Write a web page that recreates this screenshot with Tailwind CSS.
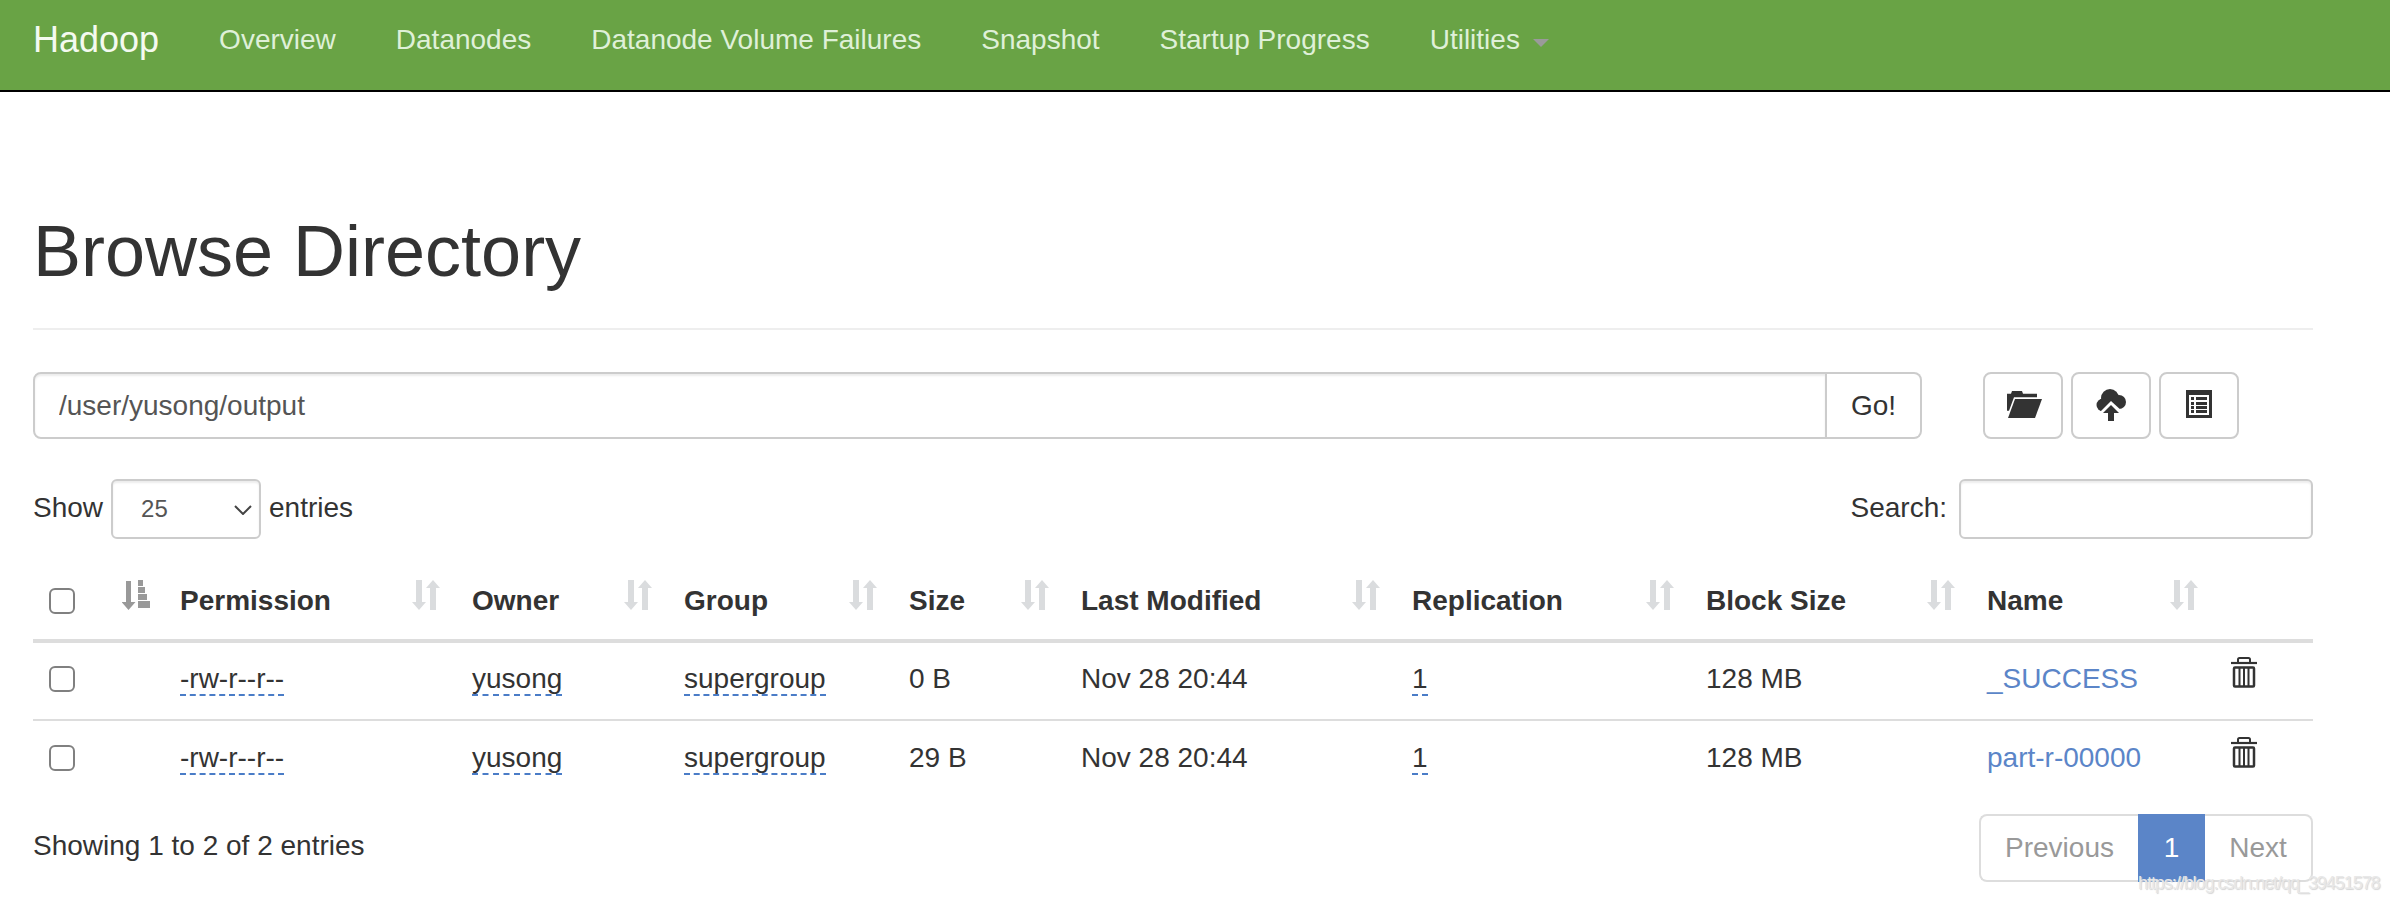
<!DOCTYPE html>
<html lang="en">
<head>
    <meta charset="UTF-8">
    <title>Browsing HDFS</title>
    <script src="https://cdn.jsdelivr.net/npm/@tailwindcss/browser@4"></script>
</head>
<body class="relative h-[902px] overflow-hidden bg-white font-['Liberation_Sans',Arial,sans-serif] text-[28px] leading-[40px] text-[#333]">
    <svg class="hidden">
        <symbol id="sort" viewBox="0 0 28 30">
            <path d="M4 0h6v22h4l-7 8-7-8h4z"/>
            <path d="M18 30h6V8h4l-7-8-7 8h4z"/>
        </symbol>
        <symbol id="trash" viewBox="0 0 26 31">
            <path fill="none" stroke="#333" stroke-width="2" d="M7 5V2.500Q7 1 8.500 1h9Q19 1 19 2.500V5"/>
            <path fill="none" stroke="#333" stroke-width="2.200" d="M0 6h26"/>
            <rect x="3" y="10.500" width="20" height="19" rx="1" fill="none" stroke="#333" stroke-width="2.500"/>
            <path fill="none" stroke="#333" stroke-width="2" d="M8.500 10v20M13 10v20M17.500 10v20"/>
        </symbol>
    </svg>

    <!-- Navbar -->
    <nav class="flex h-[92px] items-start border-b-2 border-black bg-[#69a345] pl-[33px]">
        <a href="#" class="mt-[20px] text-[36px] leading-[40px] text-[#f4faf0]">Hadoop</a>
        <ul class="ml-[30px] flex pt-[20px] text-[#dff0d8]">
            <li class="px-[30px]">Overview</li>
            <li class="px-[30px]">Datanodes</li>
            <li class="px-[30px]">Datanode Volume Failures</li>
            <li class="px-[30px]">Snapshot</li>
            <li class="px-[30px]">Startup Progress</li>
            <li class="flex items-center px-[30px]">Utilities
                <span class="mt-[5px] ml-[13px] h-0 w-0 border-x-[8px] border-t-[8px] border-x-transparent border-t-[#9a9a9a]"></span>
            </li>
        </ul>
    </nav>

    <div class="ml-[33px] w-[2280px]">
        <!-- Page header -->
        <h1 class="mt-[120px] text-[72px] leading-[79px] text-[#333]">Browse Directory</h1>
        <div class="mt-[37px] h-[2px] bg-[#eee]"></div>

        <!-- Path bar -->
        <div class="mt-[42px] flex h-[67px]">
            <div class="flex w-[1889px]">
                <input value="/user/yusong/output" class="min-w-0 flex-1 rounded-l-[8px] border-2 border-[#ccc] px-[24px] text-[28px] text-[#555] shadow-[inset_0_2px_2px_rgba(0,0,0,0.075)]">
                <button class="w-[95px] rounded-r-[8px] border-2 border-l-0 border-[#ccc] text-center text-[#333]">Go!</button>
            </div>
            <div class="ml-[61px] flex gap-[8px]">
                <button class="flex w-[80px] items-center justify-center rounded-[8px] border-2 border-[#ccc] pb-[3px] pl-[3px]">
                    <svg class="h-[27px] w-[35px]" viewBox="0 0 35 30" preserveAspectRatio="none" fill="#333"><path d="M0 3h4l1-3h10l1 3h14v4H7L2 22H0z"/><path d="M8 9h27l-7 21H1z"/></svg>
                </button>
                <button class="flex w-[80px] items-center justify-center rounded-[8px] border-2 border-[#ccc] pb-[1px]">
                    <svg class="h-[32px] w-[30px]" viewBox="0 0 30 32" fill="#333">
                        <circle cx="7" cy="16" r="6.500"/><circle cx="14" cy="9" r="9"/><circle cx="23" cy="13" r="7"/><path d="M7 12h16v9H7z"/>
                        <path fill="#fff" d="M15 12L4 23v9h23v-9z"/>
                        <path d="M15 16l8 8h-5v8h-6v-8H7z"/>
                    </svg>
                </button>
                <button class="flex w-[80px] items-center justify-center rounded-[8px] border-2 border-[#ccc] pb-[4px]">
                    <svg class="h-[28px] w-[26px]" viewBox="0 0 26 28" fill="#333">
                        <path fill-rule="evenodd" d="M0 0h26v28H0zM3 5v20h20V5z"/>
                        <path d="M5 7h3v3H5zM10 7h11v3H10zM5 12h3v3H5zM10 12h11v3H10zM5 16h3v3H5zM10 16h11v3H10zM5 20h3v3H5zM10 20h11v3H10z"/>
                    </svg>
                </button>
            </div>
        </div>

        <!-- Length + search -->
        <div class="mt-[40px] flex h-[60px] items-center justify-between">
            <label class="flex items-center">
                <span class="pb-[3px]">Show</span>
                <span class="relative mx-[8px] block">
                    <select class="block h-[60px] w-[150px] appearance-none rounded-[6px] border-2 border-[#ccc] bg-white pl-[28px] text-[24px] text-[#555] shadow-[inset_0_2px_2px_rgba(0,0,0,0.075)]"><option>25</option></select>
                    <svg class="absolute top-[26px] right-[9px] h-[10px] w-[18px]" viewBox="0 0 18 10" fill="none" stroke="#444" stroke-width="2"><path d="M1 1l8 8 8-8"/></svg>
                </span>
                <span class="pb-[3px]">entries</span>
            </label>
            <label class="flex items-center">
                <span class="pb-[3px]">Search:</span>
                <input class="ml-[12px] h-[60px] w-[354px] rounded-[6px] border-2 border-[#ccc] shadow-[inset_0_2px_2px_rgba(0,0,0,0.075)]">
            </label>
        </div>

        <!-- Table -->
        <table class="mt-[23px] w-full table-fixed border-collapse">
            <colgroup>
                <col class="w-[131px]"><col class="w-[292px]"><col class="w-[212px]"><col class="w-[225px]"><col class="w-[172px]"><col class="w-[331px]"><col class="w-[294px]"><col class="w-[281px]"><col class="w-[243px]"><col>
            </colgroup>
            <thead>
                <tr class="h-[79px] border-b-4 border-[#ddd] text-left font-bold">
                    <th class="relative pl-[16px]">
                        <input type="checkbox" class="block size-[26px] appearance-none rounded-[6px] border-2 border-[#808080] bg-white">
                        <svg class="absolute top-[18px] right-[14px] h-[30px] w-[28px]" viewBox="0 0 28 30" fill="#999">
                            <path d="M4 1h5v21h4.500l-7 8-7-8H4z"/>
                            <path d="M16 0h5v6h-5zM16 7h7v6h-7zM16 14h9v6h-9zM16 21h12v7H16z"/>
                        </svg>
                    </th>
                    <th class="relative pl-[16px]">Permission<svg class="absolute top-[18px] right-[16px] h-[30px] w-[28px] fill-[#dadcde]"><use href="#sort"/></svg></th>
                    <th class="relative pl-[16px]">Owner<svg class="absolute top-[18px] right-[16px] h-[30px] w-[28px] fill-[#dadcde]"><use href="#sort"/></svg></th>
                    <th class="relative pl-[16px]">Group<svg class="absolute top-[18px] right-[16px] h-[30px] w-[28px] fill-[#dadcde]"><use href="#sort"/></svg></th>
                    <th class="relative pl-[16px]">Size<svg class="absolute top-[18px] right-[16px] h-[30px] w-[28px] fill-[#dadcde]"><use href="#sort"/></svg></th>
                    <th class="relative pl-[16px]">Last Modified<svg class="absolute top-[18px] right-[16px] h-[30px] w-[28px] fill-[#dadcde]"><use href="#sort"/></svg></th>
                    <th class="relative pl-[16px]">Replication<svg class="absolute top-[18px] right-[16px] h-[30px] w-[28px] fill-[#dadcde]"><use href="#sort"/></svg></th>
                    <th class="relative pl-[16px]">Block Size<svg class="absolute top-[18px] right-[16px] h-[30px] w-[28px] fill-[#dadcde]"><use href="#sort"/></svg></th>
                    <th class="relative pl-[16px]">Name<svg class="absolute top-[18px] right-[16px] h-[30px] w-[28px] fill-[#dadcde]"><use href="#sort"/></svg></th>
                    <th></th>
                </tr>
            </thead>
            <tbody>
                <tr class="h-[79px] border-b-2 border-[#ddd]">
                    <td class="pb-[4px] pl-[16px]"><input type="checkbox" class="block size-[26px] appearance-none rounded-[6px] border-2 border-[#808080] bg-white"></td>
                    <td class="pb-[4px] pl-[16px]"><span class="border-b-2 border-dashed border-[#4a7cc7]">-rw-r--r--</span></td>
                    <td class="pb-[4px] pl-[16px]"><span class="border-b-2 border-dashed border-[#4a7cc7]">yusong</span></td>
                    <td class="pb-[4px] pl-[16px]"><span class="border-b-2 border-dashed border-[#4a7cc7]">supergroup</span></td>
                    <td class="pb-[4px] pl-[16px]">0 B</td>
                    <td class="pb-[4px] pl-[16px]">Nov 28 20:44</td>
                    <td class="pb-[4px] pl-[16px]"><span class="border-b-2 border-dashed border-[#4a7cc7]">1</span></td>
                    <td class="pb-[4px] pl-[16px]">128 MB</td>
                    <td class="pb-[4px] pl-[16px] text-[#5b85c8]">_SUCCESS</td>
                    <td class="pt-[14px] pl-[17px] align-top"><svg class="h-[31px] w-[26px]"><use href="#trash"/></svg></td>
                </tr>
                <tr class="h-[79px]">
                    <td class="pb-[4px] pl-[16px]"><input type="checkbox" class="block size-[26px] appearance-none rounded-[6px] border-2 border-[#808080] bg-white"></td>
                    <td class="pb-[4px] pl-[16px]"><span class="border-b-2 border-dashed border-[#4a7cc7]">-rw-r--r--</span></td>
                    <td class="pb-[4px] pl-[16px]"><span class="border-b-2 border-dashed border-[#4a7cc7]">yusong</span></td>
                    <td class="pb-[4px] pl-[16px]"><span class="border-b-2 border-dashed border-[#4a7cc7]">supergroup</span></td>
                    <td class="pb-[4px] pl-[16px]">29 B</td>
                    <td class="pb-[4px] pl-[16px]">Nov 28 20:44</td>
                    <td class="pb-[4px] pl-[16px]"><span class="border-b-2 border-dashed border-[#4a7cc7]">1</span></td>
                    <td class="pb-[4px] pl-[16px]">128 MB</td>
                    <td class="pb-[4px] pl-[16px] text-[#5b85c8]">part-r-00000</td>
                    <td class="pt-[16px] pl-[17px] align-top"><svg class="h-[31px] w-[26px]"><use href="#trash"/></svg></td>
                </tr>
            </tbody>
        </table>

        <!-- Info + pagination -->
        <div class="mt-[15px] flex items-start justify-between">
            <div class="pt-[12px]">Showing 1 to 2 of 2 entries</div>
            <ul class="flex h-[68px] text-[#999]">
                <li class="flex w-[159px] items-center justify-center rounded-l-[8px] border-2 border-r-0 border-[#ddd]">Previous</li>
                <li class="flex w-[67px] items-center justify-center bg-[#5b85c8] text-white">1</li>
                <li class="flex w-[108px] items-center justify-center rounded-r-[8px] border-2 border-l-0 border-[#ddd]">Next</li>
            </ul>
        </div>
    </div>

    <!-- Watermark -->
    <div class="absolute top-[873px] left-[2138px] text-[18px] leading-[20px] tracking-[-1.05px] text-[#e8e8e8] [text-shadow:1px_1px_1px_#d4d4d4]">https://blog.csdn.net/qq_39451578</div>
</body>
</html>
